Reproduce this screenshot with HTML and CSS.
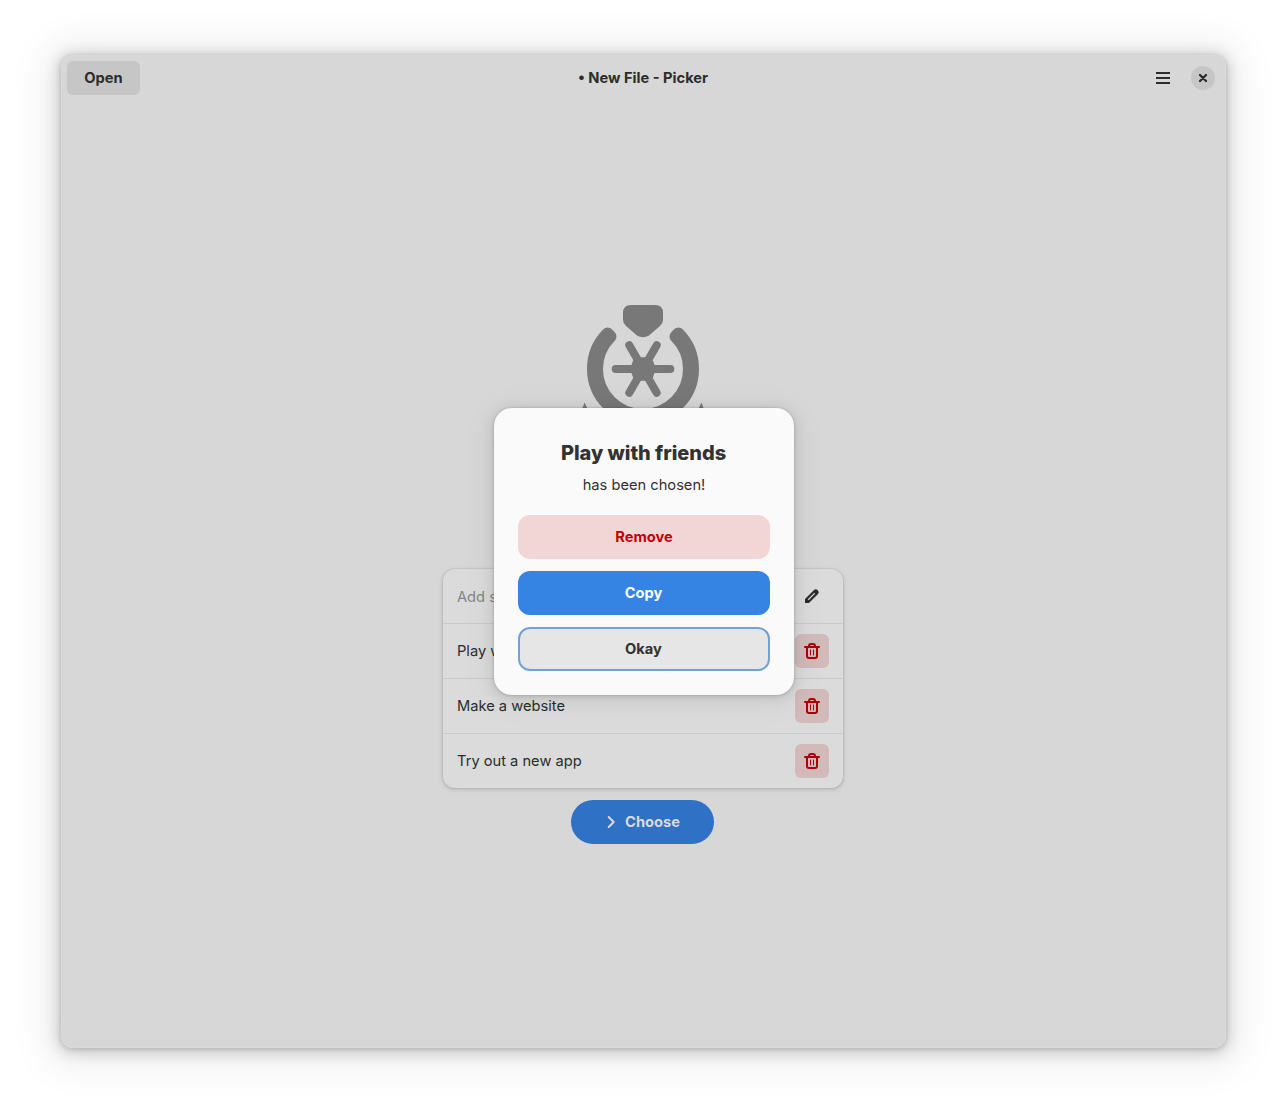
FILE: index.html
```html
<!DOCTYPE html>
<html lang="en">
<head>
<meta charset="utf-8">
<title>New File - Picker</title>
<link rel="stylesheet" href="styles.css">
</head>
<body>
<svg class="symbols" aria-hidden="true">
  <symbol id="trash" viewBox="0 0 16 16">
    <path d="M1 4h14M5 3.500V3a2 2 0 0 1 2-2h2a2 2 0 0 1 2 2v.5M3 4v9a2 2 0 0 0 2 2h6a2 2 0 0 0 2-2V4" fill="none" stroke="currentColor" stroke-width="2" stroke-linecap="round"/>
    <path d="M6.500 7v5M9.500 7v5" fill="none" stroke="currentColor" stroke-width="1" stroke-linecap="round"/>
  </symbol>
</svg>
<main class="window">
  <header class="headerbar">
    <button class="open">Open</button>
    <h1 class="title">• New File - Picker</h1>
    <div class="controls">
      <svg class="menu" viewBox="0 0 16 16"><path d="M1 3h14M1 8h14M1 13h14" stroke="currentColor" stroke-width="2"/></svg>
      <button class="close" aria-label="Close"><svg viewBox="0 0 16 16"><path d="M5 5l6 6M11 5l-6 6" stroke="currentColor" stroke-width="2.3" stroke-linecap="round"/></svg></button>
    </div>
  </header>
  <section class="content">
    <svg class="logo" viewBox="0 0 128 128">
      <path d="M52 0h24q8 0 8 8v7q0 3.500-3 6L70 30.500q-6 3.500-12 0L47 21q-3-2.500-3-6V8q0-8 8-8z"/>
      <path class="ring" d="M28.600 28.600A50 50 0 1 0 99.400 28.600L96.500 31.500A46 46 0 1 1 31.500 31.500z"/>
      <g class="spokes"><path d="M36.700 64h54.600M50.300 40.200l27.400 47.600M77.700 40.200L50.300 87.800"/></g>
      <path d="M58 52.200h12l4 3.500 3 8.300-3 8.300-4 3.500H58l-4-3.500-3-8.300 3-8.300z"/>
      <path d="M5.500 97.500L3.500 103 2 110v18h124v-18l-1.500-7-2-5.500-5.500 11.500H11z"/>
    </svg>
    <div class="list">
      <div class="row entry"><span>Add something</span><svg class="pencil" viewBox="0 0 16 16"><path d="M2.300 11.300l8.300-8.300a1.600 1.600 0 0 1 2.400 2.400l-8.300 8.300z" fill="none" stroke="currentColor" stroke-width="2.200" stroke-linejoin="round"/><path d="M1 15v-4.500L5.500 15zM9 3.500L12.500 7l2-2.500-3-3z" fill="currentColor"/></svg></div>
      <div class="row"><span>Play with friends</span><button class="delete" aria-label="Delete"><svg><use href="#trash"/></svg></button></div>
      <div class="row"><span>Make a website</span><button class="delete" aria-label="Delete"><svg><use href="#trash"/></svg></button></div>
      <div class="row"><span>Try out a new app</span><button class="delete" aria-label="Delete"><svg><use href="#trash"/></svg></button></div>
    </div>
    <button class="choose"><svg viewBox="0 0 16 16"><path d="M5.700 3l5 5-5 5" fill="none" stroke="currentColor" stroke-width="2" stroke-linecap="round" stroke-linejoin="round"/></svg>Choose</button>
  </section>
  <div class="dialog" role="dialog">
    <h2>Play with friends</h2>
    <p>has been chosen!</p>
    <button class="remove">Remove</button>
    <button class="copy">Copy</button>
    <button class="okay">Okay</button>
  </div>
</main>
</body>
</html>
```
FILE: styles.css
```css
* { box-sizing: border-box; }
body {
  margin: 0;
  height: 1115px;
  padding: 55px 61px 67px;
  overflow: hidden;
  background: #fff;
  color: #2c2c2c;
  font: 14.667px/18px Inter, sans-serif;
}
button { border: 0; padding: 0; margin: 0; font: inherit; font-weight: 700; color: inherit; }
h1, h2, p { margin: 0; }
svg { display: block; width: 16px; height: 16px; }
.symbols { display: none; }
.window {
  position: relative;
  height: 993px;
  border-radius: 12px;
  background: #d7d7d7;
  box-shadow: inset 0 0 0 1px #dadada, 0 1px 4px 1px rgba(0,0,0,.13), 0 2px 14px 4px rgba(0,0,0,.14), 0 3px 38px 16px rgba(0,0,0,.07);
}
.headerbar {
  display: grid;
  grid-template-columns: 1fr auto 1fr;
  align-items: center;
  height: 46px;
  padding: 0 11px 0 6px;
}
.open { width: 73px; height: 34px; border-radius: 6px; background: #c6c6c6; }
.title { padding-left: 4px; font-size: 14.667px; font-weight: 700; }
.controls { display: flex; justify-content: flex-end; align-items: center; gap: 20px; }
.close { display: grid; place-items: center; width: 24px; height: 24px; border-radius: 50%; background: #c6c6c6; }
.content { display: flex; flex-direction: column; align-items: center; padding-top: 204px; margin-left: -1px; }
.logo { width: 128px; height: 128px; fill: #787878; }
.ring { stroke: #787878; stroke-width: 12; stroke-linejoin: round; }
.spokes { stroke: #787878; stroke-width: 8; stroke-linecap: round; }
.list {
  width: 400px;
  margin-top: 136px;
  border-radius: 12px;
  background: #dbdbdb;
  box-shadow: 0 0 0 1px rgba(0,0,0,.035), 0 1px 3px 1px rgba(0,0,0,.09), 0 2px 6px 2px rgba(0,0,0,.035);
}
.row { display: flex; align-items: center; justify-content: space-between; height: 55px; padding: 0 14px; border-bottom: 1px solid #c9c9c9; }
.row:last-child { height: 54px; border: 0; }
.entry span { color: #858585; padding-top: 1px; }
.pencil { margin-right: 9px; }
.delete { display: grid; place-items: center; width: 34px; height: 34px; border-radius: 6px; background: #d2baba; color: #ad0004; }
.choose { display: flex; align-items: center; justify-content: center; gap: 6px; width: 143px; height: 44px; margin: 12px 1px 0 0; padding-right: 2px; border-radius: 22px; background: #2e71c5; color: #dadada; }
.dialog {
  position: absolute;
  left: 433px;
  top: 353px;
  width: 300px;
  height: 287px;
  padding: 32px 24px 24px;
  display: flex;
  flex-direction: column;
  border-radius: 18px;
  background: #fafafa;
  color: #323232;
  text-align: center;
  box-shadow: 0 0 0 1px rgba(0,0,0,.04), 0 1px 4px rgba(0,0,0,.14), 0 2px 14px 3px rgba(0,0,0,.07), 0 4px 32px 8px rgba(0,0,0,.035);
}
.dialog h2 { padding-right: 1px; font-size: 20px; line-height: 26px; font-weight: 800; letter-spacing: -.04px; }
.dialog p { margin: 10px 0 21px; }
.dialog button { height: 44px; flex: none; border-radius: 12px; }
.dialog button + button { margin-top: 12px; padding-right: 1px; }
.dialog .remove { background: #f2d6d6; color: #c00005; }
.dialog .copy { background: #3584e4; color: #fff; }
.dialog .okay { background: #e6e6e6; border: 2px solid #70a2d9; }
```
